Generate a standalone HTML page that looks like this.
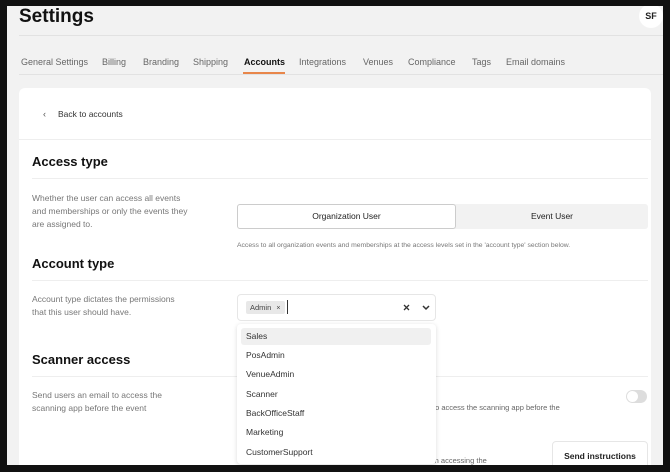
<!DOCTYPE html>
<html><head><meta charset="utf-8"><style>
*{box-sizing:border-box;margin:0;padding:0}
body{width:670px;height:472px;background:#111;font-family:"Liberation Sans",sans-serif;overflow:hidden;position:relative}
.frame{position:absolute;left:7px;top:6px;width:656px;height:459px;background:#f2f2f2;overflow:hidden}
.abs{position:absolute}
h1{position:absolute;left:12px;top:0px;font-size:19px;font-weight:bold;color:#111}
.av{position:absolute;left:632px;top:-2px;width:24px;height:24px;border-radius:50%;background:#fff;font-size:9px;font-weight:bold;display:flex;align-items:center;justify-content:center;color:#222}
.line{position:absolute;height:1px;background:#e2e2e2}
.tab{position:absolute;top:51px;font-size:9px;color:#666}
.card{position:absolute;left:12px;top:82px;width:632px;height:400px;background:#fff;border-radius:6px}
.h2{position:absolute;font-size:13px;font-weight:bold;color:#111}
.desc{position:absolute;font-size:8.5px;color:#777;line-height:13px}
.opt{position:absolute;left:9px;font-size:8.5px;color:#333}
</style></head><body>
<div class="frame">
<h1>Settings</h1>
<div class="av">SF</div>
<div class="line" style="left:12px;top:29px;width:644px"></div>
<span class="tab" style="left:14px">General Settings</span>
<span class="tab" style="left:95px">Billing</span>
<span class="tab" style="left:136px">Branding</span>
<span class="tab" style="left:186px">Shipping</span>
<span class="tab" style="left:237px;color:#111;font-weight:bold">Accounts</span>
<span class="tab" style="left:292px">Integrations</span>
<span class="tab" style="left:356px">Venues</span>
<span class="tab" style="left:401px">Compliance</span>
<span class="tab" style="left:465px">Tags</span>
<span class="tab" style="left:499px">Email domains</span>
<div class="abs" style="left:236px;top:66px;width:42px;height:2px;background:#e8864a"></div>
<div class="line" style="left:12px;top:68px;width:644px"></div>
<div class="card">
 <span class="abs" style="left:24px;top:21px;font-size:9px;color:#555">‹</span>
 <span class="abs" style="left:39px;top:21px;font-size:8.5px;color:#333">Back to accounts</span>
 <div class="line" style="left:0;top:51px;width:632px;background:#eee"></div>
 <div class="h2" style="left:13px;top:66px">Access type</div>
 <div class="line" style="left:13px;top:90px;width:616px;background:#eee"></div>
 <div class="desc" style="left:13px;top:104px">Whether the user can access all events<br>and memberships or only the events they<br>are assigned to.</div>
 <div class="abs" style="left:218px;top:116px;width:411px;height:25px;background:#f2f2f2;border-radius:3px"></div>
 <div class="abs" style="left:218px;top:116px;width:219px;height:25px;background:#fff;border:1px solid #ccc;border-radius:3px;font-size:8.5px;color:#222;text-align:center;line-height:23px">Organization User</div>
 <div class="abs" style="left:437px;top:116px;width:192px;height:25px;font-size:8.5px;color:#222;text-align:center;line-height:25px">Event User</div>
 <div class="abs" style="left:218px;top:154px;font-size:6.8px;color:#777">Access to all organization events and memberships at the access levels set in the 'account type' section below.</div>
 <div class="h2" style="left:13px;top:168px">Account type</div>
 <div class="line" style="left:13px;top:192px;width:616px;background:#eee"></div>
 <div class="desc" style="left:13px;top:205px">Account type dictates the permissions<br>that this user should have.</div>
 <div class="abs" style="left:218px;top:206px;width:199px;height:27px;border:1px solid #e6e6e6;border-radius:4px;background:#fff"></div>
 <div class="abs" style="left:227px;top:213px;width:39px;height:13px;background:#e8e8e8;border-radius:2px;font-size:7.5px;color:#444;line-height:13px;padding-left:4px">Admin <span style="margin-left:3px;font-size:7px">×</span></div>
 <div class="abs" style="left:268px;top:212px;width:1px;height:14px;background:#333"></div>
 <svg class="abs" style="left:384px;top:216px" width="7" height="7"><path d="M1 1l5 5M6 1l-5 5" stroke="#333" stroke-width="1.3"/></svg>
 <svg class="abs" style="left:403px;top:217px" width="8" height="6"><path d="M1 1l3 3 3-3" stroke="#333" stroke-width="1.5" fill="none"/></svg>
 <div class="h2" style="left:13px;top:264px">Scanner access</div>
 <div class="line" style="left:13px;top:288px;width:616px;background:#eee"></div>
 <div class="desc" style="left:13px;top:301px">Send users an email to access the<br>scanning app before the event</div>
 <div class="abs" style="left:414px;top:315px;font-size:7.5px;color:#666">to access the scanning app before the</div>
 <div class="abs" style="left:414px;top:368px;font-size:7.5px;color:#666">in accessing the</div>
 <div class="abs" style="left:607px;top:302px;width:21px;height:13px;border-radius:7px;background:#ddd"><div style="position:absolute;left:1px;top:1px;width:11px;height:11px;border-radius:50%;background:#fff"></div></div>
 <div class="abs" style="left:533px;top:353px;width:96px;height:30px;border:1px solid #e6e6e6;border-radius:4px;font-size:8.5px;font-weight:bold;color:#222;text-align:center;line-height:28px">Send instructions</div>
 <div class="abs" style="left:218px;top:236px;width:199px;height:140px;background:#fff;border-radius:4px;box-shadow:0 1px 5px rgba(0,0,0,.15)">
  <div class="abs" style="left:4px;top:4px;width:190px;height:17px;background:#f0f0f0;border-radius:3px"></div>
  <span class="opt" style="top:7px">Sales</span>
  <span class="opt" style="top:26px">PosAdmin</span>
  <span class="opt" style="top:45px">VenueAdmin</span>
  <span class="opt" style="top:65px">Scanner</span>
  <span class="opt" style="top:84px">BackOfficeStaff</span>
  <span class="opt" style="top:103px">Marketing</span>
  <span class="opt" style="top:123px">CustomerSupport</span>
 </div>
</div>
</div>
</body></html>
